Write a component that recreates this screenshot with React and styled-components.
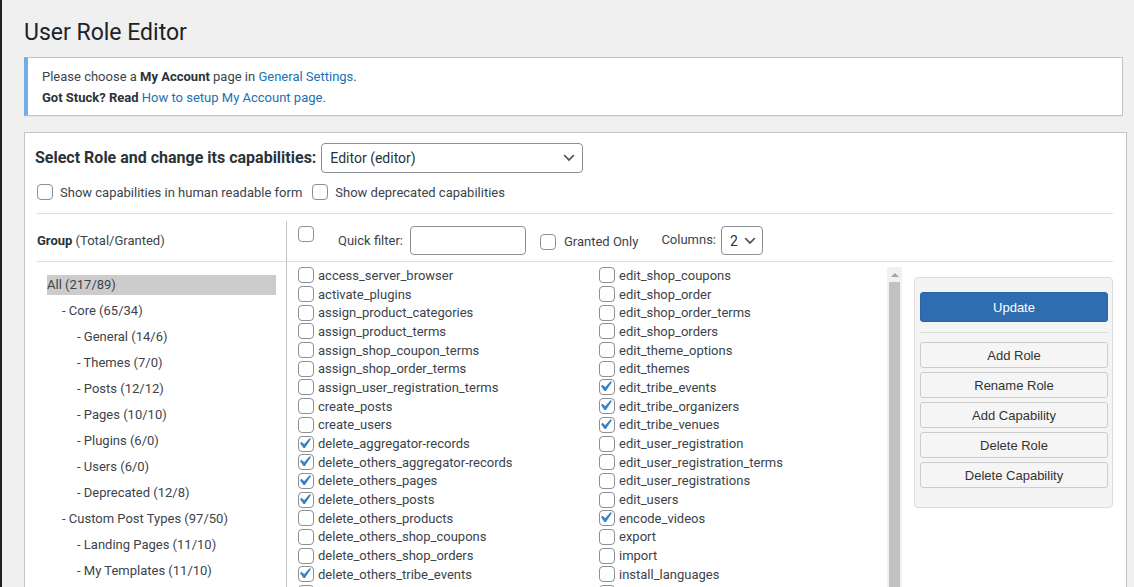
import React from 'react'
import styled, { createGlobalStyle } from 'styled-components'

const GlobalStyle = createGlobalStyle`
  html, body {
    margin: 0;
    padding: 0;
    overflow: hidden;
  }
  body {
    background: #f0f0f1;
    font-family: Roboto, "Noto Sans", sans-serif;
    font-size: 13px;
    color: #3c434a;
  }
  * { box-sizing: border-box; }
`

const groups = [
  { label: 'All (217/89)', level: 0, active: true },
  { label: '- Core (65/34)', level: 1 },
  { label: '- General (14/6)', level: 2 },
  { label: '- Themes (7/0)', level: 2 },
  { label: '- Posts (12/12)', level: 2 },
  { label: '- Pages (10/10)', level: 2 },
  { label: '- Plugins (6/0)', level: 2 },
  { label: '- Users (6/0)', level: 2 },
  { label: '- Deprecated (12/8)', level: 2 },
  { label: '- Custom Post Types (97/50)', level: 1 },
  { label: '- Landing Pages (11/10)', level: 2 },
  { label: '- My Templates (11/10)', level: 2 },
]

const caps = [
  ['access_server_browser'],
  ['activate_plugins'],
  ['assign_product_categories'],
  ['assign_product_terms'],
  ['assign_shop_coupon_terms'],
  ['assign_shop_order_terms'],
  ['assign_user_registration_terms'],
  ['create_posts'],
  ['create_users'],
  ['delete_aggregator-records', true],
  ['delete_others_aggregator-records', true],
  ['delete_others_pages', true],
  ['delete_others_posts', true],
  ['delete_others_products'],
  ['delete_others_shop_coupons'],
  ['delete_others_shop_orders'],
  ['delete_others_tribe_events', true],
  ['delete_others_tribe_organizers', true],
  ['edit_shop_coupons'],
  ['edit_shop_order'],
  ['edit_shop_order_terms'],
  ['edit_shop_orders'],
  ['edit_theme_options'],
  ['edit_themes'],
  ['edit_tribe_events', true],
  ['edit_tribe_organizers', true],
  ['edit_tribe_venues', true],
  ['edit_user_registration'],
  ['edit_user_registration_terms'],
  ['edit_user_registrations'],
  ['edit_users'],
  ['encode_videos', true],
  ['export'],
  ['import'],
  ['install_languages'],
  ['install_plugins'],
]

const Checkbox = ({ checked }) => (
  <Box>
    {checked && (
      <Tick viewBox="0 0 20 20">
        <path d="M14.83 4.89l1.34.94-5.81 8.38H9.02L5.78 9.67l1.34-1.25 2.57 2.4z" fill="#3582c4" />
      </Tick>
    )}
  </Box>
)

const Chevron = () => (
  <svg width="16" height="16" viewBox="0 0 20 20">
    <path d="M5 6l5 5 5-5 2 1-7 7-7-7 2-1z" fill="#50575e" />
  </svg>
)

const App = () => {
  return (
    <Page>
      <GlobalStyle />
      <Stripe />
      <Content>
        <Title>User Role Editor</Title>
        <Notice>
          <div>
            Please choose a <b>My Account</b> page in <Link>General Settings</Link>.
          </div>
          <div>
            <b>Got Stuck? Read</b> <Link>How to setup My Account page.</Link>
          </div>
        </Notice>

        <Panel>
          <RoleRow>
            <RoleLabel>Select Role and change its capabilities:</RoleLabel>
            <RoleSelect>
              Editor (editor)
              <Chevron />
            </RoleSelect>
          </RoleRow>
          <Options>
            <Option>
              <Checkbox />
              Show capabilities in human readable form
            </Option>
            <Option>
              <Checkbox />
              Show deprecated capabilities
            </Option>
          </Options>
          <Rule />

          <Editor>
            <GroupHead>
              <b>Group</b>&nbsp;(Total/Granted)
            </GroupHead>
            <CapsHead>
              <Checkbox />
              <FilterLabel>Quick filter:</FilterLabel>
              <FilterInput />
              <GrantedOnly>
                <Checkbox />
                Granted Only
              </GrantedOnly>
              <ColumnsLabel>Columns:</ColumnsLabel>
              <ColumnsSelect>
                2
                <Chevron />
              </ColumnsSelect>
            </CapsHead>
            <EditorRule />
            <GroupList>
              {groups.map((g) => (
                <GroupItem key={g.label} $level={g.level} $active={g.active}>
                  {g.label}
                </GroupItem>
              ))}
            </GroupList>
            <CapsCell>
              <CapsList>
                {caps.map(([name, checked]) => (
                  <CapRow key={name}>
                    <Checkbox checked={checked} />
                    {name}
                  </CapRow>
                ))}
              </CapsList>
              <ScrollTrack>
                <ScrollArrow />
                <ScrollThumb />
              </ScrollTrack>
              <Actions>
                <PrimaryButton>Update</PrimaryButton>
                <ActionsSep />
                <ActionButton>Add Role</ActionButton>
                <ActionButton>Rename Role</ActionButton>
                <ActionButton>Add Capability</ActionButton>
                <ActionButton>Delete Role</ActionButton>
                <ActionButton>Delete Capability</ActionButton>
              </Actions>
            </CapsCell>
          </Editor>
        </Panel>
      </Content>
    </Page>
  )
}

export default App

const Page = styled.div`
  display: flex;
  height: 100vh;
  overflow: hidden;
`
const Stripe = styled.div`
  width: 2px;
  flex-shrink: 0;
  background: #1d2327;
`
const Content = styled.div`
  flex: 1;
  padding: 0 7px 0 22px;
`
const Title = styled.h1`
  margin: 0;
  padding-top: 18px;
  font-size: 23px;
  font-weight: 400;
  line-height: 30px;
  color: #1d2327;
`
const Notice = styled.div`
  margin: 9px 4px 16px 0;
  padding: 8px 12px 7px 14px;
  background: #fff;
  border: 1px solid #c3c4c7;
  border-left: 4px solid #72aee6;
  box-shadow: 0 1px 1px rgba(0, 0, 0, 0.04);
  line-height: 21px;
  color: #3c434a;
  b {
    color: #2c3338;
  }
`
const Link = styled.a`
  color: #2271b1;
`
const Panel = styled.div`
  background: #fff;
  border: 1px solid #c3c4c7;
  padding: 10px 13px 0 12px;
`
const RoleRow = styled.div`
  display: flex;
  align-items: center;
  gap: 4px;
  margin-left: -2px;
`
const RoleLabel = styled.div`
  font-size: 16px;
  font-weight: 700;
  color: #2c3338;
  padding-bottom: 2px;
`
const RoleSelect = styled.div`
  width: 262px;
  height: 30px;
  display: flex;
  align-items: center;
  justify-content: space-between;
  padding: 0 5px 0 8px;
  margin-left: 1px;
  border: 1px solid #8c8f94;
  border-radius: 4px;
  font-size: 14px;
  color: #2c3338;
`
const Options = styled.div`
  display: flex;
  align-items: center;
  gap: 10px;
  height: 16px;
  margin-top: 11px;
`
const Option = styled.label`
  display: flex;
  align-items: center;
  gap: 7px;
`
const Rule = styled.div`
  height: 1px;
  margin-top: 13px;
  background: #dcdcde;
`
const Box = styled.span`
  position: relative;
  flex-shrink: 0;
  width: 16px;
  height: 16px;
  background: #fff;
  border: 1px solid #8c8f94;
  border-radius: 4px;
`
const Tick = styled.svg`
  position: absolute;
  top: -4px;
  left: -5px;
  width: 21px;
  height: 21px;
`
const Editor = styled.div`
  display: grid;
  grid-template-columns: 250px 1fr;
  margin-top: 7px;
`
const GroupHead = styled.div`
  height: 40px;
  display: flex;
  align-items: center;
  padding-bottom: 1px;
  border-right: 1px solid #c3c4c7;
  b {
    color: #2c3338;
  }
`
const CapsHead = styled.div`
  display: flex;
  align-items: flex-start;
  padding: 5px 0 0 11px;
`
const FilterLabel = styled.span`
  margin-left: 24px;
  line-height: 30px;
`
const FilterInput = styled.div`
  width: 116px;
  height: 29px;
  margin-left: 7px;
  border: 1px solid #8c8f94;
  border-radius: 4px;
`
const GrantedOnly = styled.label`
  display: flex;
  align-items: center;
  gap: 8px;
  height: 30px;
  margin-left: 14px;
  padding-top: 1px;
`
const ColumnsLabel = styled.span`
  margin-left: 23px;
  line-height: 27px;
`
const ColumnsSelect = styled.div`
  width: 42px;
  height: 29px;
  margin-left: 5px;
  display: flex;
  align-items: center;
  justify-content: space-between;
  padding: 0 4px 0 8px;
  border: 1px solid #8c8f94;
  border-radius: 4px;
  font-size: 14px;
  color: #2c3338;
`
const EditorRule = styled.div`
  grid-column: 1 / -1;
  height: 1px;
  background: #dcdcde;
`
const GroupList = styled.div`
  padding: 13px 10px 0;
  border-right: 1px solid #c3c4c7;
`
const GroupItem = styled.div`
  height: 20px;
  line-height: 19px;
  margin-bottom: 6px;
  padding-left: ${(p) => p.$level * 15}px;
  background: ${(p) => (p.$active ? '#cccccc' : 'transparent')};
  white-space: nowrap;
`
const CapsCell = styled.div`
  display: flex;
  align-items: flex-start;
  padding: 4px 0 0 11px;
`
const CapsList = styled.div`
  flex: 1;
  height: 420px;
  overflow: hidden;
  display: grid;
  grid-template-columns: 301px 1fr;
  grid-template-rows: repeat(18, 18.7px);
  grid-auto-flow: column;
`
const CapRow = styled.div`
  display: flex;
  align-items: center;
  gap: 4px;
  white-space: nowrap;
`
const ScrollTrack = styled.div`
  width: 15px;
  height: 420px;
  margin-top: 1px;
  display: flex;
  flex-direction: column;
  align-items: center;
  padding-top: 6px;
  background: #f1f1f1;
`
const ScrollArrow = styled.div`
  width: 0;
  height: 0;
  border-left: 4px solid transparent;
  border-right: 4px solid transparent;
  border-bottom: 4px solid #a3a3a3;
`
const ScrollThumb = styled.div`
  flex: 1;
  width: 11px;
  margin-top: 5px;
  background: #c1c1c1;
`
const Actions = styled.div`
  width: 199px;
  flex-shrink: 0;
  margin: 11px 0 0 12px;
  padding: 14px 4px 19px 5px;
  display: flex;
  flex-direction: column;
  background: #f4f4f4;
  border: 1px solid #dcdcde;
  border-radius: 4px;
  font-family: "Liberation Sans", Arial, sans-serif;
`
const PrimaryButton = styled.div`
  height: 30px;
  display: flex;
  align-items: center;
  justify-content: center;
  background: #2e6db0;
  border: 1px solid #2a65a5;
  border-radius: 3px;
  color: #fff;
  font-size: 13px;
`
const ActionsSep = styled.div`
  height: 1px;
  margin: 10px 0 9px;
  background: #dcdcdc;
`
const ActionButton = styled.div`
  height: 26px;
  display: flex;
  align-items: center;
  justify-content: center;
  background: #f5f5f5;
  border: 1px solid #cccccc;
  border-radius: 3px;
  color: #333;
  font-size: 13px;
  & + & {
    margin-top: 4px;
  }
`
